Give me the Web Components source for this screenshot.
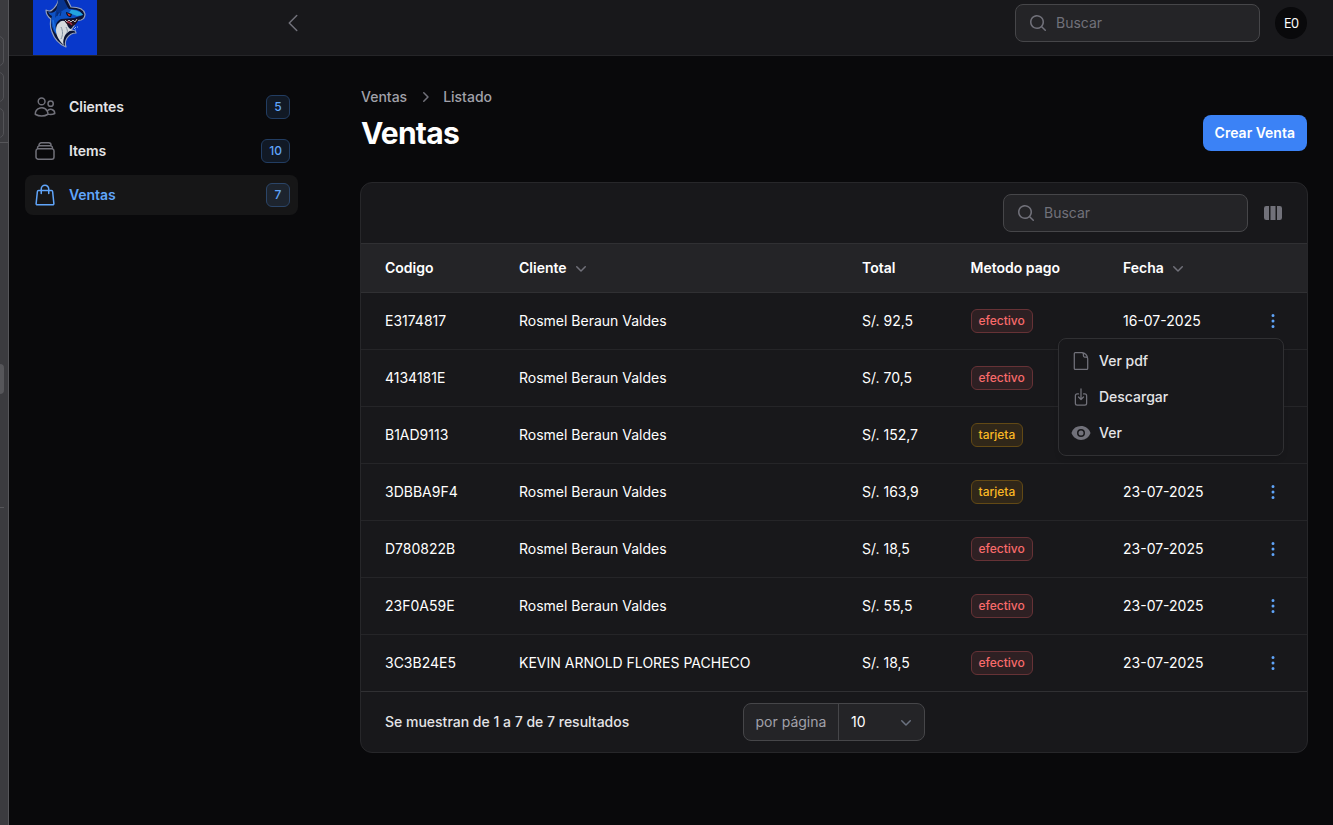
<!DOCTYPE html>
<html lang="es">
<head>
<meta charset="utf-8">
<title>Ventas</title>
<style>
html,body{margin:0;height:100%;background:#09090b;overflow:hidden}
body{font:500 14px/20px Inter,"Liberation Sans",sans-serif;color:#fff}
</style>
</head>
<body>
<sales-app></sales-app>
<script>
const define = (name, html, setup) => {
  const t = document.createElement('template');
  t.innerHTML = '<style>*{box-sizing:border-box}:host{display:block;box-sizing:border-box}svg{display:block;flex:none}</style>' + html;
  customElements.define(name, class extends HTMLElement {
    constructor(){ super(); this.attachShadow({mode:'open'}); }
    connectedCallback(){
      if (this.shadowRoot.childNodes.length) return;
      const f = t.content.cloneNode(true);
      if (setup) setup(this, f);
      this.shadowRoot.append(f);
    }
  });
};

const outline = (size, d, w = 1.5) => `<svg width="${size}" height="${size}" viewBox="0 0 24 24" fill="none" stroke="currentColor" stroke-width="${w}" stroke-linecap="round" stroke-linejoin="round"><path d="${d}"/></svg>`;
const solid = (size, d) => `<svg width="${size}" height="${size}" viewBox="0 0 20 20" fill="currentColor"><path fill-rule="evenodd" clip-rule="evenodd" d="${d}"/></svg>`;
const icons = {
  users: outline(24, 'M15 19.128a9.38 9.38 0 0 0 2.625.372 9.337 9.337 0 0 0 4.121-.952 4.125 4.125 0 0 0-7.533-2.493M15 19.128v-.003c0-1.113-.285-2.16-.786-3.07M15 19.128v.106A12.318 12.318 0 0 1 8.624 21c-2.331 0-4.512-.645-6.374-1.766l-.001-.109a6.375 6.375 0 0 1 11.964-3.07M12 6.375a3.375 3.375 0 1 1-6.75 0 3.375 3.375 0 0 1 6.75 0Zm8.25 2.25a2.625 2.625 0 1 1-5.25 0 2.625 2.625 0 0 1 5.25 0Z'),
  stack: outline(24, 'M6 6.878V6a2.25 2.25 0 0 1 2.25-2.25h7.5A2.25 2.25 0 0 1 18 6v.878m-12 0c.235-.083.487-.128.75-.128h10.5c.263 0 .515.045.75.128m-12 0A2.25 2.25 0 0 0 4.5 9v.878m13.5-3A2.25 2.25 0 0 1 19.5 9v.878m0 0a2.246 2.246 0 0 0-.75-.128H5.25c-.263 0-.515.045-.75.128m15 0A2.25 2.25 0 0 1 21 12v6a2.25 2.25 0 0 1-2.25 2.25H5.25A2.25 2.25 0 0 1 3 18v-6c0-.98.626-1.813 1.5-2.122'),
  bag: outline(24, 'M15.75 10.5V6a3.75 3.75 0 1 0-7.5 0v4.5m11.356-1.993 1.263 12c.07.665-.45 1.243-1.119 1.243H4.25a1.125 1.125 0 0 1-1.12-1.243l1.264-12A1.125 1.125 0 0 1 5.513 7.5h12.974c.576 0 1.059.435 1.119 1.007Z'),
  left: outline(24, 'M15.75 19.5 8.25 12l7.5-7.5'),
  search: solid(20, 'M9 3.5a5.5 5.5 0 1 0 0 11 5.5 5.5 0 0 0 0-11ZM2 9a7 7 0 1 1 12.452 4.391l3.328 3.329a.75.75 0 1 1-1.06 1.06l-3.329-3.328A7 7 0 0 1 2 9Z'),
  right: solid(20, 'M8.22 5.22a.75.75 0 0 1 1.06 0l4.25 4.25a.75.75 0 0 1 0 1.06l-4.25 4.25a.75.75 0 0 1-1.06-1.06L11.94 10 8.22 6.28a.75.75 0 0 1 0-1.06Z'),
  down: solid(20, 'M5.22 8.22a.75.75 0 0 1 1.06 0L10 11.94l3.72-3.72a.75.75 0 1 1 1.06 1.06l-4.25 4.25a.75.75 0 0 1-1.06 0L5.22 9.28a.75.75 0 0 1 0-1.06Z'),
  columns: solid(20, 'M14 17h2.75A2.25 2.25 0 0 0 19 14.75v-9.5A2.25 2.25 0 0 0 16.75 3H14v14ZM12.5 3h-5v14h5V3ZM3.25 3H6v14H3.25A2.25 2.25 0 0 1 1 14.75v-9.5A2.25 2.25 0 0 1 3.25 3Z'),
  dots: solid(20, 'M10 3a1.5 1.5 0 1 1 0 3 1.5 1.5 0 0 1 0-3ZM10 8.5a1.5 1.5 0 1 1 0 3 1.5 1.5 0 0 1 0-3ZM11.5 15.5a1.5 1.5 0 1 0-3 0 1.5 1.5 0 0 0 3 0Z'),
  file: `<svg width="20" height="20" viewBox="0 0 20 20" fill="none" stroke="currentColor" stroke-width="1.25" stroke-linejoin="round"><path d="M11.7 1.6H4.3c-.6 0-1 .4-1 1v14.8c0 .6.4 1 1 1h11.4c.6 0 1-.4 1-1V7.8c0-3.300-2.700-6.200-6-6.200 1 0 1.700.8 1.700 1.700v1.500c0 .7.500 1.200 1.200 1.200h1.500c.9 0 1.600.7 1.600 1.600"/></svg>`,
  download: outline(20, 'M9 8.25H7.5a2.25 2.25 0 0 0-2.25 2.25v9a2.25 2.25 0 0 0 2.25 2.25h9a2.25 2.25 0 0 0 2.25-2.25v-9a2.25 2.25 0 0 0-2.25-2.25H15M9 12l3 3m0 0 3-3m-3 3V2.25'),
  eye: '<svg width="20" height="20" viewBox="0 0 20 20" fill="currentColor"><path d="M10 12.5a2.5 2.5 0 1 0 0-5 2.500 2.500 0 0 0 0 5Z"/><path fill-rule="evenodd" d="M.664 10.590a1.651 1.651 0 0 1 0-1.186A10.004 10.004 0 0 1 10 3c4.257 0 7.893 2.660 9.336 6.410.147.381.146.804 0 1.186A10.004 10.004 0 0 1 10 17c-4.257 0-7.893-2.660-9.336-6.410ZM14 10a4 4 0 1 1-8 0 4 4 0 0 1 8 0Z"/></svg>'
};

define('ui-icon', '<span></span>', (h, f) => {
  f.querySelector('span').style.display = 'block';
  f.querySelector('span').innerHTML = icons[h.getAttribute('name')];
});

define('shark-logo', `<style>:host{width:64px;height:55px;background:#0838cb;overflow:hidden}</style>
<svg width="64" height="55" viewBox="0 0 64 55">
<g stroke-linejoin="round">
<path d="M13 10c2 1 4 2 6 0 4-3 6-7 7-12l8 1 4 8c7 0 13 2 14 7 0 3-1 5-4 6l-6 1-1 5c-1 2-2 3-4 4 4 0 6 1 6 3-4 0-7 2-9 5-2 3-2 6-1 9-7-3-12-9-14-15-2-5-2-9-1-13-3-2-5-5-5-9Z" fill="#0a1335" stroke="#93a0bd" stroke-width="1.200"/>
<path d="M15 12c4 2 7 0 9-3l4-8 8 8c8 0 12 2 14 6l-9 3-13 1c-5 2-7 8-4 16-5-4-7-14-5-19-2-1-3-2-4-4Z" fill="#0e52c4"/>
<path d="M25 0h6l4 8c-6 2-10 6-13 10 0-6 3-12 3-18Z" fill="#07348f"/>
<path d="M38 10c6 0 10 2 12 5l-6 1-8-3Z" fill="#23a4dd"/>
<path d="M20 20c1 5 1 9 4 13" stroke="#1d6fe0" stroke-width="1.500" fill="none"/>
<path d="M26 23c2-3 6-3 8 0 0 3 2 6 6 7-5 1-8 4-9 8-1 3-1 5 0 7-5-4-8-10-8-15 0-3 1-6 3-7Z" fill="#d5dade"/>
<path d="M28 27c2 4 2 8 0 12m5-12c1 2 2 4 1 6" stroke="#8493a3" fill="none"/>
<path d="M31 19c6 2 11 1 15-1-1 4-4 8-7 8-4 0-7-3-8-7Z" fill="#24101c"/>
<path d="M32 20l2 2 2-2 2 2 2-2 2 2 2-3" fill="none" stroke="#c5ccd6" stroke-width=".9"/>
<path d="M34 22c2 0 4 1 5 3" stroke="#a33143" stroke-width="1.300" fill="none"/>
<path d="M33 12l6 2-1 3c-3 0-5-2-5-5Z" fill="#071025"/><path d="m34 13 4 2-2 1Z" fill="#f53a2c"/>
<path d="m25 12-1 4m4-4-1 4" stroke="#0a2a70"/><path d="m41 29 2-2m-1 3h1m1-3h1" stroke="#9cb9ef" stroke-width="1"/>
</g></svg>`);

define('search-field', `<style>
:host{display:flex;width:245px;height:38px;border:1px solid #464649;border-radius:8px;background:#242427;align-items:center;padding-left:12px;gap:8px;color:#71717a;font-weight:400;font-size:14px}
</style><ui-icon name="search"></ui-icon><span>Buscar</span>`);

define('top-bar', `<style>
:host{display:flex;height:56px;background:#18181b;border-bottom:1px solid #252528;padding:0 26px 0 24px;align-items:flex-start}
.toggle{margin:11px 0 0 184px;color:#71717a}
search-field{margin:4px 15px 0 auto}
.avatar{width:32px;height:32px;border-radius:50%;background:#09090b;margin-top:7px;display:grid;place-items:center;font:400 14px/20px "Open Sans","Noto Sans",sans-serif;letter-spacing:-.7px}
</style><shark-logo></shark-logo><ui-icon class="toggle" name="left"></ui-icon><search-field></search-field><div class="avatar">E0</div>`);

define('nav-item', `<style>
:host{display:flex;height:40px;border-radius:8px;padding:0 8px;align-items:center;color:#e4e4e7;font-weight:600;letter-spacing:-.05px}
ui-icon{color:#71717a;margin-right:12px}
b{margin-left:auto;min-width:24px;height:24px;padding:0 7px;border:1px solid #223d62;border-radius:6px;background:#111925;color:#60a5fa;font:500 12px/22px Inter,sans-serif;text-align:center}
:host([active]){background:#161617;color:#60a5fa}
:host([active]) ui-icon{color:#60a5fa}
:host([active]) b{background:#1d242e;border-color:#2b4568}
</style><ui-icon></ui-icon><slot></slot><b></b>`, (h, f) => {
  f.querySelector('ui-icon').setAttribute('name', h.getAttribute('icon'));
  f.querySelector('b').textContent = h.getAttribute('count');
});

define('side-nav', `<style>:host{display:flex;flex-direction:column;gap:4px;width:289px;flex:none;padding:31px 0 0 16px}</style>
<nav-item icon="users" count="5">Clientes</nav-item><nav-item icon="stack" count="10">Items</nav-item><nav-item icon="bag" count="7" active>Ventas</nav-item>`);

define('page-heading', `<style>
:host{display:flex;align-items:flex-end;justify-content:space-between}
.crumbs{display:flex;align-items:center;color:#a1a1aa;gap:8px}
.crumbs ui-icon{color:#71717a}
h1{margin:8px 0 0;font:700 30px/36px Inter,sans-serif;letter-spacing:-.75px}
.button{background:#3b82f6;height:36px;border-radius:8px;padding:8px 12px;font-weight:600}
</style><div><div class="crumbs"><span>Ventas</span><ui-icon name="right"></ui-icon><span>Listado</span></div><h1>Ventas</h1></div><div class="button">Crear Venta</div>`);

define('pay-badge', `<style>
:host{display:inline-block;height:24px;border:1px solid #663236;border-radius:6px;background:#2e2023;color:#f96b6b;font-size:12px;font-weight:500;line-height:22px;padding:0 7px;vertical-align:top}
:host([kind=tarjeta]){border-color:#624915;background:#302719;color:#fbb724}
</style><slot></slot>`);

define('action-menu', `<style>
:host{position:absolute;top:45px;right:23px;width:226px;height:118px;border:1px solid #303033;border-radius:8px;background:#18181b;padding:4px;color:#e4e4e7;font-weight:500;z-index:2;box-shadow:0 4px 6px -2px #0002}
div{display:flex;align-items:center;gap:8px;height:36px;padding:0 8px}
ui-icon{color:#71717a}
</style><div><ui-icon name="file"></ui-icon>Ver pdf</div><div><ui-icon name="download"></ui-icon>Descargar</div><div><ui-icon name="eye"></ui-icon>Ver</div>`);

const grid = 'display:grid;grid-template-columns:134px 343px 108.500px 152.500px 1fr 56px;padding-left:24px;align-items:center;';
define('table-head', `<style>:host{${grid}height:50px;background:#242427;border-top:1px solid #303033;border-bottom:1px solid #303033;font-weight:600}
span{display:flex;gap:4px;align-items:center}ui-icon{color:#71717a}</style>
<span>Codigo</span><span>Cliente<ui-icon name="down"></ui-icon></span><span>Total</span><span>Metodo pago</span><span>Fecha<ui-icon name="down"></ui-icon></span><span></span>`);

define('table-row', `<style>:host{${grid}height:57px;border-bottom:1px solid #252528;font-weight:400;position:relative}
:host([last]){border-bottom-color:#303033}
.dots{color:#60a5fa;justify-self:start;margin-left:12px}</style>
<span></span><span></span><span></span><div><pay-badge></pay-badge></div><span></span><ui-icon class="dots" name="dots"></ui-icon><slot></slot>`, (h, f) => {
  const [code, client, total, pay, date] = h.getAttribute('cells').split('|');
  const s = f.querySelectorAll('span');
  [code, client, total, date].forEach((v, i) => s[i].textContent = v);
  const b = f.querySelector('pay-badge');
  b.textContent = pay; b.setAttribute('kind', pay);
});

define('table-footer', `<style>
:host{display:grid;grid-template-columns:1fr auto 1fr;align-items:center;height:60px;padding:0 24px;color:#e4e4e7}
.select{display:flex;height:38px;border:1px solid #464649;border-radius:8px;background:#242427;align-items:center;color:#fff;font-weight:400}
.label{width:95px;padding-left:11.500px;color:#a1a1aa;border-right:1px solid #464649;height:36px;line-height:36px}
.value{width:85px;padding:0 8px 0 12px;display:flex;align-items:center;justify-content:space-between}
ui-icon{color:#6b7280}
</style><span>Se muestran de 1 a 7 de 7 resultados</span><div class="select"><span class="label">por página</span><span class="value">10<ui-icon name="down"></ui-icon></span></div>`);

define('sales-table', `<style>
:host{border:1px solid #27272a;border-radius:12px;background:#18181b;margin:31px -1px 0}
.tools{height:60px;display:flex;justify-content:flex-end;align-items:center;padding-right:24px;gap:15px}
.tools>ui-icon{color:#71717a}
</style><div class="tools"><search-field></search-field><ui-icon name="columns"></ui-icon></div><table-head></table-head>
<table-row cells="E3174817|Rosmel Beraun Valdes|S/. 92,5|efectivo|16-07-2025"><action-menu></action-menu></table-row>
<table-row cells="4134181E|Rosmel Beraun Valdes|S/. 70,5|efectivo|"></table-row>
<table-row cells="B1AD9113|Rosmel Beraun Valdes|S/. 152,7|tarjeta|"></table-row>
<table-row cells="3DBBA9F4|Rosmel Beraun Valdes|S/. 163,9|tarjeta|23-07-2025"></table-row>
<table-row cells="D780822B|Rosmel Beraun Valdes|S/. 18,5|efectivo|23-07-2025"></table-row>
<table-row cells="23F0A59E|Rosmel Beraun Valdes|S/. 55,5|efectivo|23-07-2025"></table-row>
<table-row last cells="3C3B24E5|KEVIN ARNOLD FLORES PACHECO|S/. 18,5|efectivo|23-07-2025"></table-row>
<table-footer></table-footer>`);

define('window-edge', `<style>
:host{width:9px;flex:none;height:825px;background:#3b3b3f;border-right:1px solid #56565a;padding-top:36px;overflow:hidden}
i{display:block;width:10px;height:30px;margin:0 0 6px -6px;border:1px solid #535357;border-radius:6px}
hr{border:0;border-top:1px solid #56565a;margin:-2px 0 0}
.thumb{width:8px;height:30px;margin:221px 0 0 -4px;border:0;border-radius:5px;background:#56565a}
.second{width:4px;margin-top:113px}
</style><i></i><i></i><i></i><hr><i class="thumb"></i><hr class="second">`);

define('sales-app', `<style>
:host{display:flex;height:825px}
.app{flex:1;min-width:0}.body{display:flex}
main{flex:1;min-width:0;padding:31px 26px 0 63px}
</style><window-edge></window-edge><div class="app"><top-bar></top-bar><div class="body"><side-nav></side-nav><main><page-heading></page-heading><sales-table></sales-table></main></div></div>`);
</script>
</body>
</html>
